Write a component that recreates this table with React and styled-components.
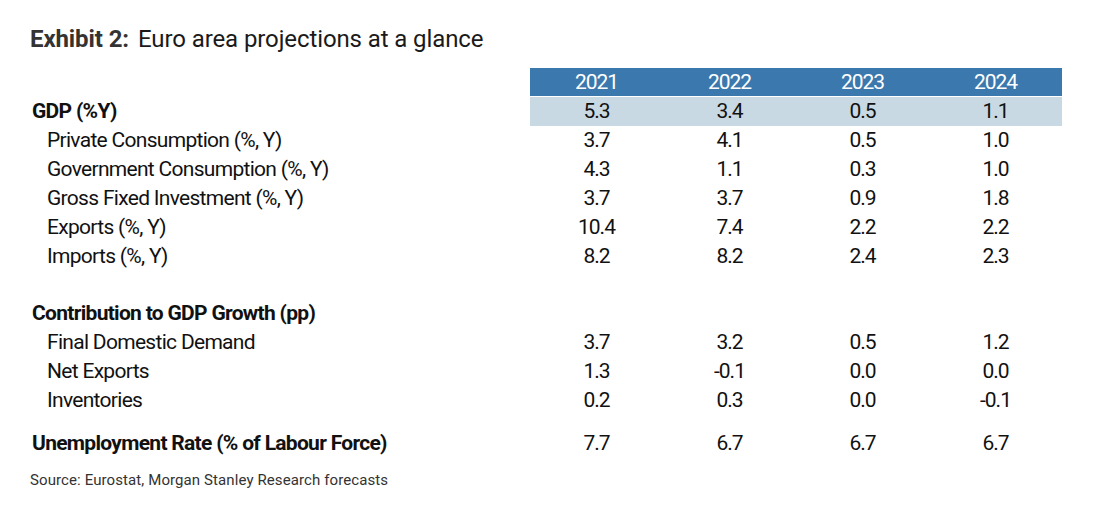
import styled, { createGlobalStyle } from "styled-components";

const GlobalStyle = createGlobalStyle`
  body {
    margin: 0;
    background: #ffffff;
    font-family: Roboto, "Liberation Sans", sans-serif;
    color: #111;
  }
`;

const Page = styled.div`
  width: 1098px;
  height: 520px;
  padding: 25px 0 0 30px;
  box-sizing: border-box;
`;

const Title = styled.h1`
  margin: 0 0 15px 0;
  font-size: 24px;
  font-weight: 400;
  line-height: 28px;
  color: #1a1a1a;
  letter-spacing: -0.1px;

  b {
    font-weight: 700;
    color: #333;
    margin-right: 9px;
  }
`;

const Table = styled.div`
  display: grid;
  grid-template-columns: 500px repeat(4, 133px);
  width: 1032px;
`;

const Row = styled.div`
  display: contents;
`;

const Label = styled.div`
  height: 29px;
  line-height: 29px;
  font-size: 21px;
  letter-spacing: -0.7px;
  font-weight: ${(p) => (p.$bold ? 700 : 400)};
  padding-left: ${(p) => (p.$indent ? "17px" : "2px")};
  white-space: nowrap;
  margin-top: ${(p) => p.$gap || 0}px;
`;

const Cell = styled.div`
  height: ${(p) => (p.$tone === "head" ? 28 : 29)}px;
  line-height: ${(p) => (p.$tone === "head" ? 28 : 29)}px;
  font-size: 21px;
  letter-spacing: -1px;
  text-align: center;
  margin-top: ${(p) => p.$gap || 0}px;
  background: ${(p) =>
    p.$tone === "head" ? "#3b78ad" : p.$tone === "band" ? "#c9d9e3" : "transparent"};
  color: ${(p) => (p.$tone === "head" ? "#ffffff" : "#111")};
`;

const Source = styled.div`
  margin-top: 13px;
  font-size: 15px;
  color: #333;
  letter-spacing: 0.1px;
`;

const rows = [
  { label: "GDP (%Y)", bold: true, band: true, values: ["5.3", "3.4", "0.5", "1.1"] },
  { label: "Private Consumption (%, Y)", indent: true, values: ["3.7", "4.1", "0.5", "1.0"] },
  { label: "Government Consumption (%, Y)", indent: true, values: ["4.3", "1.1", "0.3", "1.0"] },
  { label: "Gross Fixed Investment (%, Y)", indent: true, values: ["3.7", "3.7", "0.9", "1.8"] },
  { label: "Exports (%, Y)", indent: true, values: ["10.4", "7.4", "2.2", "2.2"] },
  { label: "Imports (%, Y)", indent: true, values: ["8.2", "8.2", "2.4", "2.3"] },
  { label: "Contribution to GDP Growth (pp)", bold: true, gap: 28, values: ["", "", "", ""] },
  { label: "Final Domestic Demand", indent: true, values: ["3.7", "3.2", "0.5", "1.2"] },
  { label: "Net Exports", indent: true, values: ["1.3", "-0.1", "0.0", "0.0"] },
  { label: "Inventories", indent: true, values: ["0.2", "0.3", "0.0", "-0.1"] },
  { label: "Unemployment Rate (% of Labour Force)", bold: true, gap: 14, values: ["7.7", "6.7", "6.7", "6.7"] },
];

const years = ["2021", "2022", "2023", "2024"];

export default function App() {
  return (
    <Page>
      <GlobalStyle />
      <Title>
        <b>Exhibit 2:</b>Euro area projections at a glance
      </Title>
      <Table>
        <Row>
          <Label />
          {years.map((y) => (
            <Cell key={y} $tone="head">
              {y}
            </Cell>
          ))}
        </Row>
        {rows.map((r) => (
          <Row key={r.label}>
            <Label $bold={r.bold} $indent={r.indent} $gap={r.gap}>
              {r.label}
            </Label>
            {r.values.map((v, i) => (
              <Cell key={i} $gap={r.gap} $tone={r.band ? "band" : undefined}>
                {v}
              </Cell>
            ))}
          </Row>
        ))}
      </Table>
      <Source>Source: Eurostat, Morgan Stanley Research forecasts</Source>
    </Page>
  );
}
